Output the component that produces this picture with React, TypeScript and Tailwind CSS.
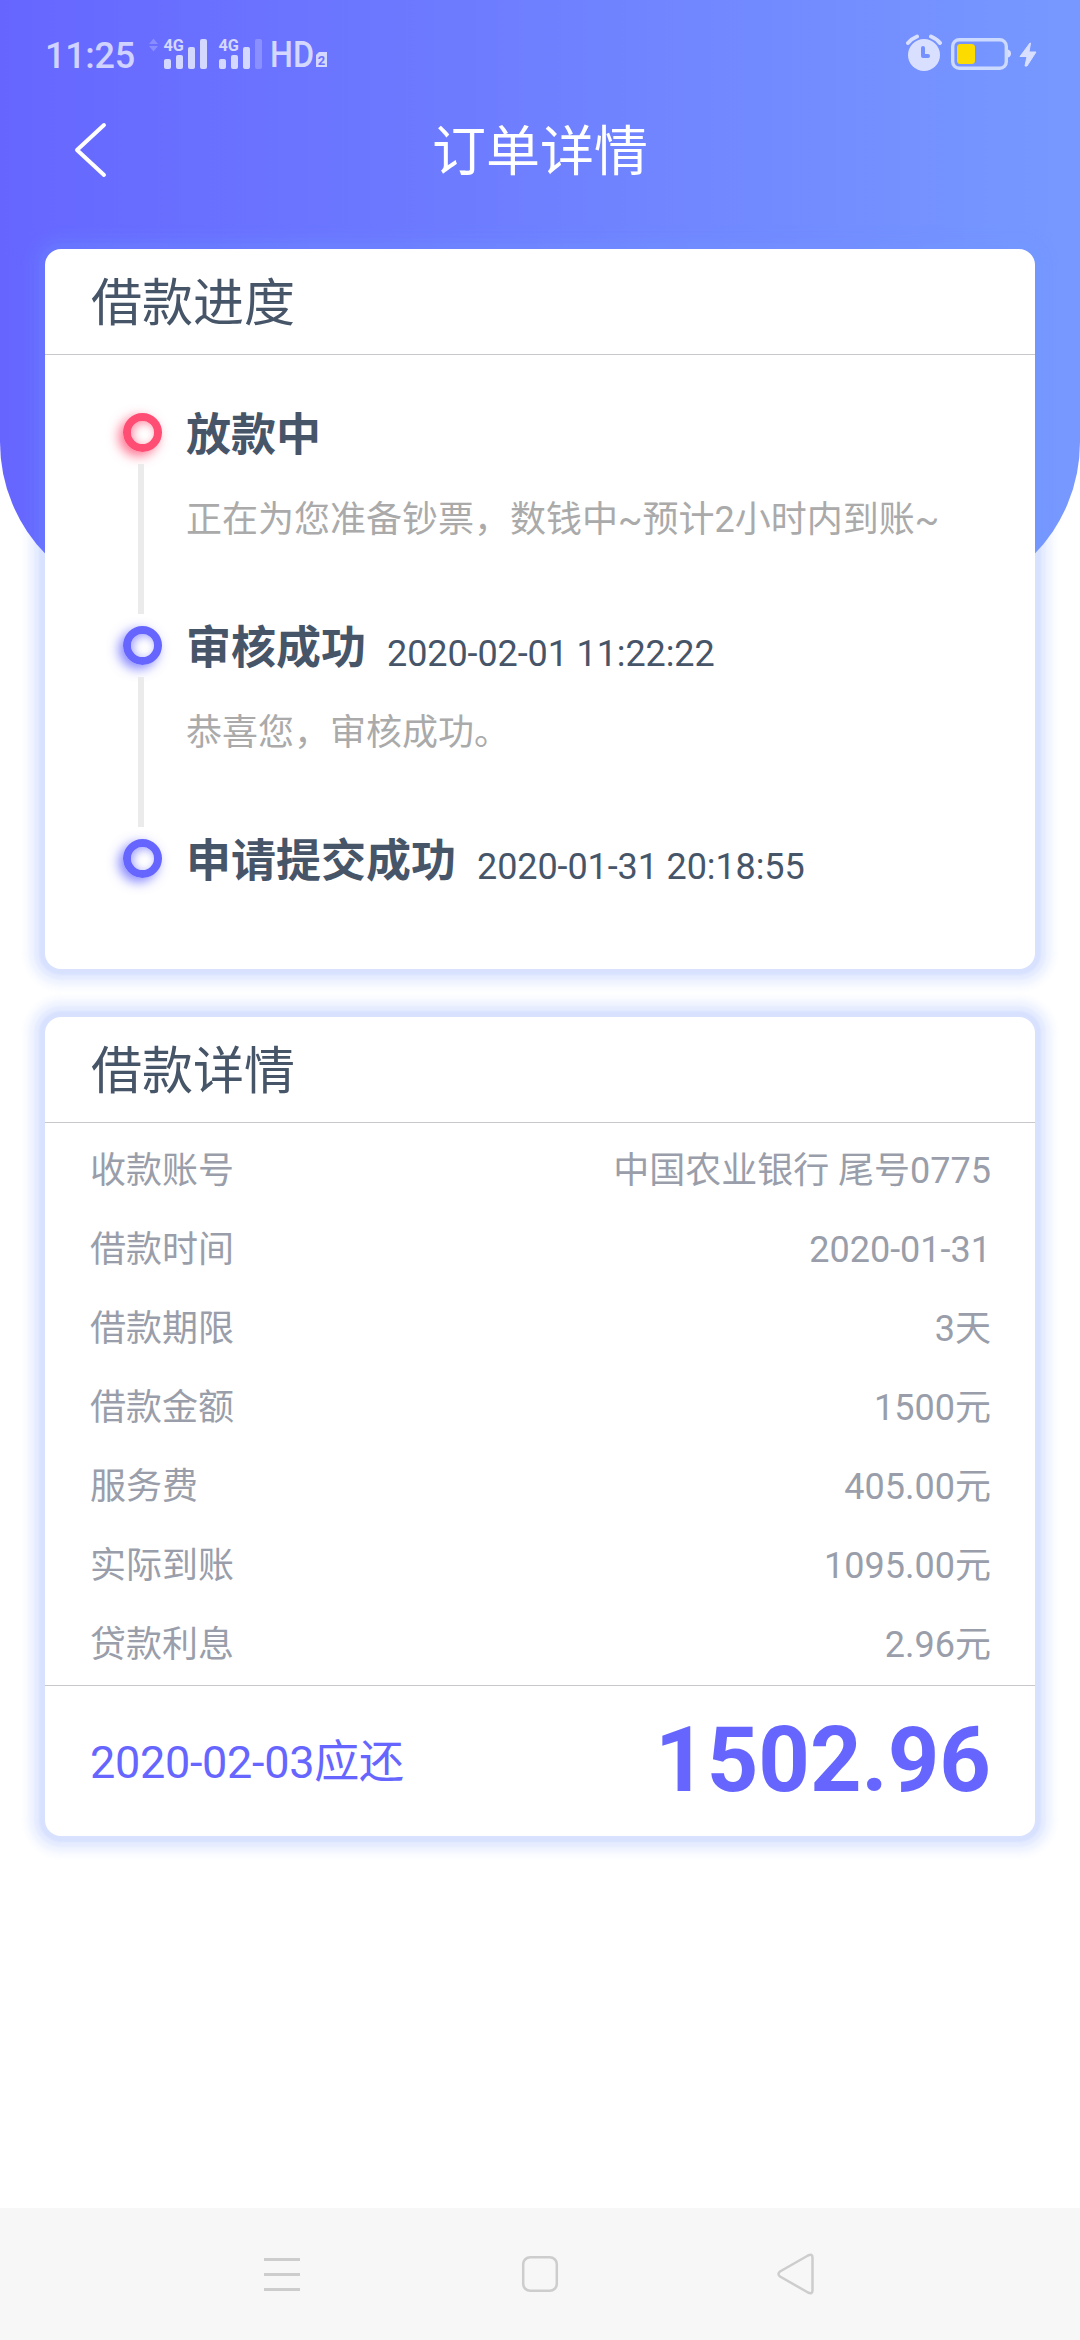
import { ReactNode } from "react";

interface Step {
  title: string;
  time?: string;
  desc?: string;
  active?: boolean;
}

const steps: Step[] = [
  { title: "放款中", desc: "正在为您准备钞票，数钱中~预计2小时内到账~", active: true },
  { title: "审核成功", time: "2020-02-01 11:22:22", desc: "恭喜您，审核成功。" },
  { title: "申请提交成功", time: "2020-01-31 20:18:55" },
];

const details = [
  { label: "收款账号", value: "中国农业银行 尾号0775" },
  { label: "借款时间", value: "2020-01-31" },
  { label: "借款期限", value: "3天" },
  { label: "借款金额", value: "1500元" },
  { label: "服务费", value: "405.00元" },
  { label: "实际到账", value: "1095.00元" },
  { label: "贷款利息", value: "2.96元" },
];

function SignalIcons() {
  return (
    <svg className="overflow-visible" width="184" height="44" viewBox="147 32 184 44" fill="#d4d8ff">
      <g opacity="0.3">
        <path d="M153.500 38.500l4.500 5.500h-9zM153.500 51.500l4.500-5.500h-9z" />
      </g>
      <text x="163.500" y="51" fontSize="16" fontWeight="700" textLength="20.500" lengthAdjust="spacingAndGlyphs">4G</text>
      <rect x="164" y="59" width="7" height="10" rx="2" />
      <rect x="176" y="55" width="7" height="14" rx="2" />
      <rect x="188" y="47" width="7" height="22" rx="2" />
      <rect x="200" y="39" width="7" height="30" rx="2" />
      <text x="218.500" y="51" fontSize="16" fontWeight="700" textLength="20.500" lengthAdjust="spacingAndGlyphs">4G</text>
      <rect x="219" y="59" width="7" height="10" rx="2" />
      <rect x="231" y="55" width="7" height="14" rx="2" />
      <rect x="243" y="47" width="7" height="22" rx="2" />
      <rect x="255" y="39" width="7" height="30" rx="2" opacity="0.3" />
      <text x="270" y="67" fontSize="36" fontWeight="500" textLength="44" lengthAdjust="spacingAndGlyphs">HD</text>
      <path d="M319 52h8v15h-11v-12z" />
      <text x="317.800" y="64.500" fontSize="13" fontWeight="700" fill="#6b72ff">2</text>
    </svg>
  );
}

function BatteryIcons() {
  return (
    <svg width="132" height="38" viewBox="904 34 132 38" fill="#d9dfff">
      <circle cx="923" cy="55" r="16" />
      <path d="M907 43q4-4.500 9-6.500M930 36.500q6 2.500 9 6.500" stroke="#d9dfff" strokeWidth="4" strokeLinecap="round" fill="none" />
      <path d="M922 48v8h5" stroke="#7590ff" strokeWidth="4" strokeLinecap="round" strokeLinejoin="round" fill="none" />
      <rect x="951.700" y="39.700" width="53.600" height="28.600" rx="6.500" stroke="#cddaff" strokeWidth="3.400" fill="none" />
      <path d="M1007 49.500q3 1 3 4t-3 4z" />
      <rect x="956" y="44" width="18" height="20" rx="3.500" fill="#fbdb00" />
      <path d="M1029 43l-10 13.500h7l-2 9.500h2l9-14h-7l1.500-9z" stroke="#d9dfff" strokeWidth="1" strokeLinejoin="round" />
    </svg>
  );
}

function Card({ title, children }: { title: string; children: ReactNode }) {
  return (
    <section className="relative mx-[45px] rounded-[16px] bg-white shadow-[0_0_2px_6px_rgba(119,153,255,0.12),0_0_2px_11px_rgba(119,153,255,0.08),0_0_3px_16px_rgba(119,153,255,0.06),0_0_4px_21px_rgba(119,153,255,0.05)]">
      <h2 className="h-[106px] border-b border-[#c8c8cc] pl-[46px] text-[51px] leading-[109px] text-[#475569]">
        {title}
      </h2>
      {children}
    </section>
  );
}

function StepDot({ active }: { active?: boolean }) {
  return (
    <div
      className={
        active
          ? "ml-[2px] h-[39px] w-[39px] shrink-0 rounded-full border-[8px] border-[#ff4d73] shadow-[-4px_4px_12px_rgba(255,77,115,0.8),inset_2px_2px_8px_rgba(255,77,115,0.6)]"
          : "ml-[2px] h-[39px] w-[39px] shrink-0 rounded-full border-[8px] border-[#6666ff] shadow-[-4px_4px_12px_rgba(102,102,255,0.8),inset_2px_2px_8px_rgba(102,102,255,0.6)]"
      }
    />
  );
}

export default function App() {
  return (
    <div className="relative flex h-[2340px] w-[1080px] flex-col overflow-hidden bg-white font-['Roboto','Noto_Sans_CJK_SC',sans-serif]">
      <div className="absolute inset-x-0 top-0 h-[603px] rounded-b-[161px] bg-[linear-gradient(90deg,#6666ff,#7799ff)]" />

      <div className="relative flex h-[108px] items-center pr-[43px] pl-[45px]">
        <span className="w-[102px] pt-[3px] text-[36px] leading-[36px] font-medium tracking-[-0.3px] text-[#d0d3ff]">11:25</span>
        <SignalIcons />
        <div className="flex-1" />
        <div className="-mt-[2px]">
          <BatteryIcons />
        </div>
      </div>

      <header className="relative flex h-[84px] items-center justify-center">
        <svg className="absolute top-[12px] left-[72px]" width="38" height="60" viewBox="0 0 38 60" fill="none" stroke="#fff" strokeWidth="4" strokeLinecap="round" strokeLinejoin="round">
          <path d="M32 5L5 30l27 25" />
        </svg>
        <h1 className="pt-[5px] text-[54px] leading-[84px] text-white">订单详情</h1>
      </header>

      <main className="flex flex-1 flex-col gap-[48px] pt-[57px]">
        <Card title="借款进度">
          <div className="h-[614px] pt-[46px] pl-[77px]">
            {steps.map((step, idx) => (
              <div key={step.title} className="flex h-[213px] gap-[26px]">
                <div className="flex w-[38px] flex-col items-center pt-[12px]">
                  <StepDot active={step.active} />
                  {idx < steps.length - 1 && <div className="mt-[12px] h-[150px] w-[6px] shrink-0 bg-[#ebebeb]" />}
                </div>
                <div className="pt-[2px] whitespace-nowrap">
                  <div className="flex h-[66px] items-baseline leading-[66px]">
                    <span className="text-[45px] font-bold text-[#475569]">{step.title}</span>
                    {step.time && <span className="relative top-[2px] ml-[21px] text-[36px] tracking-[-0.1px] text-[#475569]">{step.time}</span>}
                  </div>
                  {step.desc && <p className="mt-[24px] text-[36px] leading-[54px] text-[#aaaaaa]">{step.desc}</p>}
                </div>
              </div>
            ))}
          </div>
        </Card>

        <Card title="借款详情">
          <div className="h-[562px] pt-[9px]">
            {details.map((item) => (
              <div key={item.label} className="flex h-[79px] items-center justify-between pr-[44px] pl-[45px] text-[36px] leading-[79px] text-[#999eaa]">
                <span>{item.label}</span>
                <span>{item.value}</span>
              </div>
            ))}
          </div>
          <div className="flex h-[151px] items-center justify-between border-t border-[#c8c8cc] pr-[44px] pl-[45px] text-[#6666ff]">
            <span className="pt-[3px] text-[45px] tracking-[-0.3px]">2020-02-03应还</span>
            <span className="text-[90px] leading-[150px] font-bold">1502.96</span>
          </div>
        </Card>
      </main>

      <nav className="h-[132px] bg-[#f7f7f7]">
        <svg width="1080" height="132" viewBox="0 0 1080 132" fill="none" stroke="#cdcdcd" strokeWidth="3">
          <path d="M264 51.500h36M264 66.500h36M264 81.500h36" />
          <rect x="523.200" y="49.200" width="33.600" height="33.600" rx="7" strokeWidth="2.500" />
          <path d="M808 47.500q4.500-2 4.500 2v33q0 4-4.500 2l-28-16q-3-2.500 0-5z" strokeWidth="2.500" strokeLinejoin="round" />
        </svg>
      </nav>
    </div>
  );
}
